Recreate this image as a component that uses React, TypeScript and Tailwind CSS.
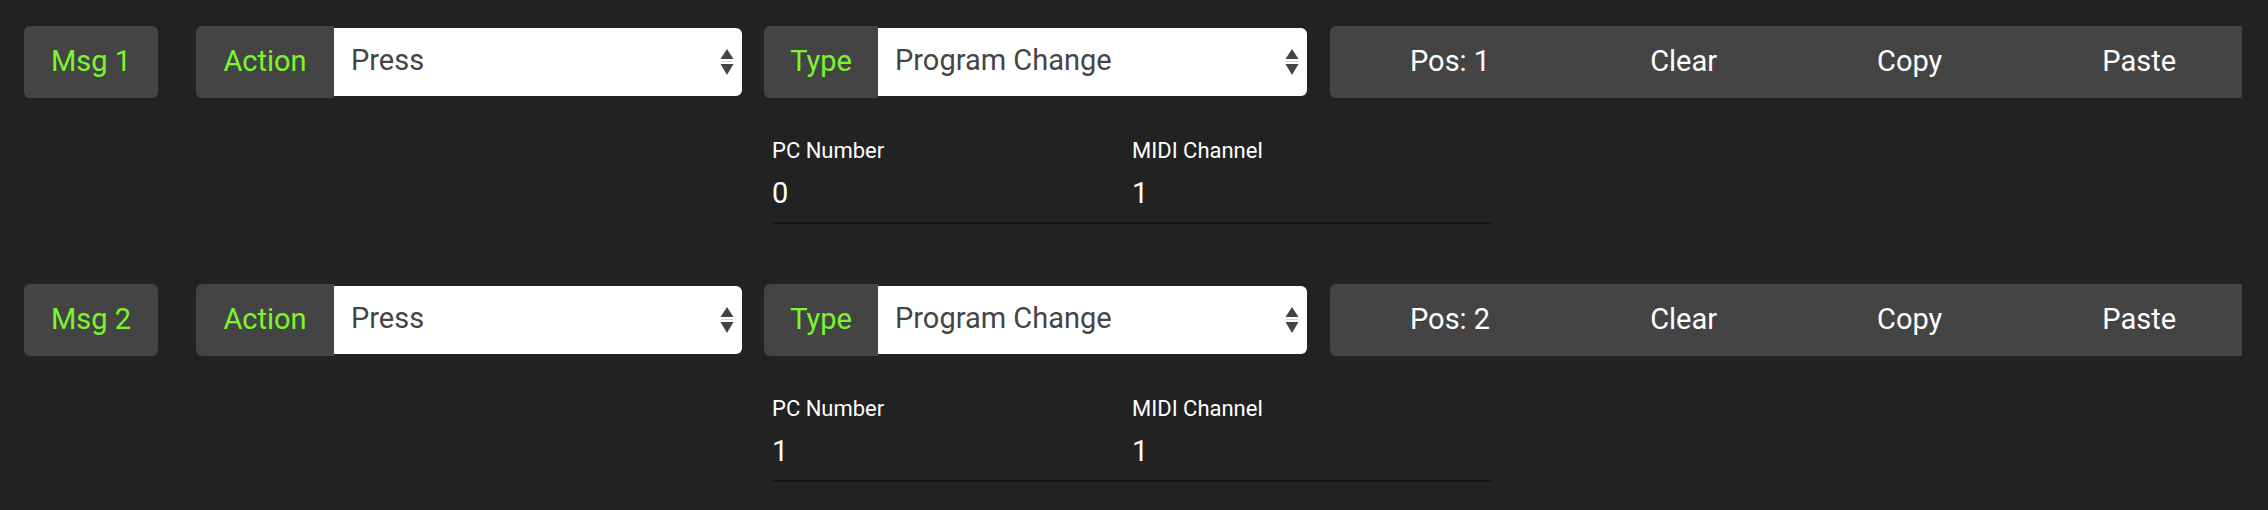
import { ReactNode } from "react";

const font = { fontFamily: "Roboto, 'Noto Sans', sans-serif" };

type Message = {
  id: number;
  action: string;
  type: string;
  pcNumber: number;
  channel: number;
};

const messages: Message[] = [
  { id: 1, action: "Press", type: "Program Change", pcNumber: 0, channel: 1 },
  { id: 2, action: "Press", type: "Program Change", pcNumber: 1, channel: 1 },
];

// Native-looking up/down select arrows
function SelectArrows() {
  return (
    <svg width="14" height="28" viewBox="0 0 14 28" className="shrink-0">
      <polygon points="7,1 13.5,11 0.5,11" fill="#444" />
      <line x1="1" y1="13.5" x2="13" y2="13.5" stroke="#d4d4d4" strokeWidth="1" />
      <polygon points="0.5,16 13.5,16 7,27" fill="#444" />
    </svg>
  );
}

function Picker({
  label,
  value,
  labelWidth,
  selectWidth,
}: {
  label: string;
  value: string;
  labelWidth: string;
  selectWidth: string;
}) {
  return (
    <div className="flex h-[72px] shrink-0">
      <div className={`flex items-center justify-center rounded-l-[6px] bg-[#444] text-[#7cf52e] ${labelWidth}`}>
        {label}
      </div>
      <div
        className={`flex h-[68px] items-center justify-between self-center rounded-r-[6px] bg-white pl-[17px] pr-[8px] text-[#454545] ${selectWidth}`}
      >
        <span className="-mt-[2px]">{value}</span>
        <SelectArrows />
      </div>
    </div>
  );
}

function ToolButton({ children }: { children: ReactNode }) {
  return <button className="shrink-0 px-[80px] text-white">{children}</button>;
}

function Field({ label, value }: { label: string; value: number }) {
  return (
    <div className="flex flex-col">
      <span className="text-[22px] leading-[22px]">{label}</span>
      <span className="mt-[17px] text-[29px] leading-[29px]">{value}</span>
    </div>
  );
}

function MessageRow({ msg }: { msg: Message }) {
  return (
    <div className="flex flex-col">
      {/* Header controls */}
      <div className="flex h-[72px] overflow-hidden text-[29px]">
        <div className="flex w-[134px] shrink-0 items-center justify-center rounded-[6px] bg-[#444] text-[#7cf52e]">
          Msg {msg.id}
        </div>
        <div className="ml-[38px]">
          <Picker label="Action" value={msg.action} labelWidth="w-[138px]" selectWidth="w-[408px]" />
        </div>
        <div className="ml-[22px]">
          <Picker label="Type" value={msg.type} labelWidth="w-[114px]" selectWidth="w-[429px]" />
        </div>
        <div className="ml-[23px] flex shrink-0 rounded-l-[6px] bg-[#444]">
          <ToolButton>Pos: {msg.id}</ToolButton>
          <ToolButton>Clear</ToolButton>
          <ToolButton>Copy</ToolButton>
          <ToolButton>Paste</ToolButton>
        </div>
      </div>

      {/* Program change fields */}
      <div className="ml-[748px] mt-[42px] grid w-[720px] grid-cols-2 border-b-2 border-[#141414] pb-[14px] text-white">
        <Field label="PC Number" value={msg.pcNumber} />
        <Field label="MIDI Channel" value={msg.channel} />
      </div>
    </div>
  );
}

export default function App() {
  return (
    <div className="min-h-screen bg-[#222] pl-[24px] pr-[26px] pt-[26px]" style={font}>
      <div className="flex flex-col gap-[60px]">
        {messages.map((msg) => (
          <MessageRow key={msg.id} msg={msg} />
        ))}
      </div>
    </div>
  );
}
